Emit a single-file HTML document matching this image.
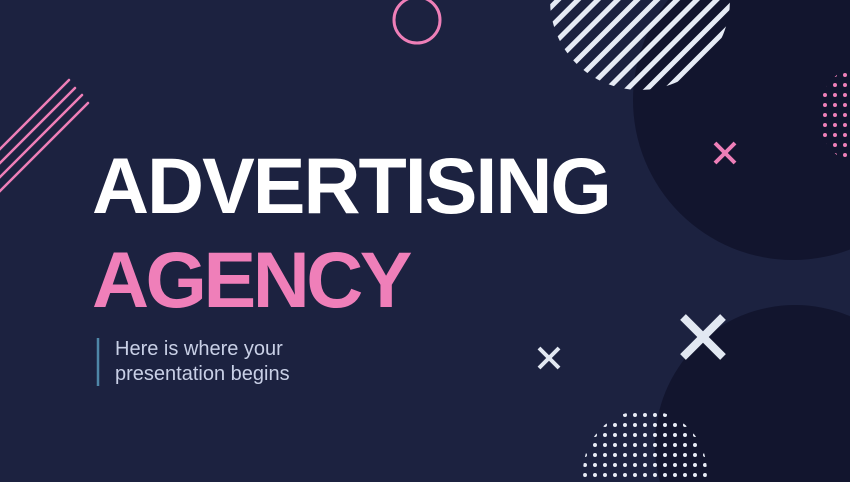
<!DOCTYPE html>
<html><head><meta charset="utf-8"><style>
html,body{margin:0;padding:0;background:#1c2240;width:850px;height:482px;overflow:hidden;}
#s{position:relative;width:850px;height:482px;overflow:hidden;background:#1c2240;font-family:"Liberation Sans",sans-serif;}
svg{position:absolute;left:0;top:0;}
.t{position:absolute;left:92px;font-weight:bold;font-size:79px;line-height:1;white-space:nowrap;}
</style></head><body><div id="s">
<svg width="850" height="482">
<defs>
<pattern id="pd" x="0" y="0" width="10" height="10" patternUnits="userSpaceOnUse"><circle cx="5" cy="5" r="2" fill="#ee7fb8"/></pattern>
<pattern id="wd" x="0" y="0" width="10" height="10" patternUnits="userSpaceOnUse"><circle cx="5" cy="5" r="2" fill="#e8ecf6"/></pattern>
<pattern id="st" x="0" y="0" width="14" height="14" patternUnits="userSpaceOnUse" patternTransform="rotate(45)"><rect x="0" y="0" width="5" height="14" fill="#e6ebf5"/></pattern>
<clipPath id="c1"><circle cx="640" cy="0" r="90"/></clipPath>
</defs>
<circle cx="793" cy="100" r="160" fill="#12152e"/>
<circle cx="795" cy="445" r="140" fill="#12152e"/>
<rect x="540" y="0" width="200" height="95" fill="url(#st)" clip-path="url(#c1)"/>
<circle cx="870" cy="115" r="52" fill="url(#pd)"/>
<circle cx="645" cy="472" r="62" fill="url(#wd)"/>
<circle cx="417" cy="20" r="23" fill="none" stroke="#ee7fb8" stroke-width="3"/>
<g stroke="#ee7fb8" stroke-width="2.5" stroke-linecap="round">
<line x1="69" y1="80" x2="-5" y2="154"/>
<line x1="75" y1="88" x2="-5" y2="168"/>
<line x1="82" y1="95" x2="-5" y2="182"/>
<line x1="88" y1="103" x2="-5" y2="196"/>
</g>
<g stroke="#ee7fb8" stroke-width="4"><line x1="715" y1="143" x2="735" y2="163"/><line x1="735" y1="143" x2="715" y2="163"/></g>
<g stroke="#e2e8f2" stroke-width="8"><line x1="683" y1="317" x2="723" y2="357"/><line x1="723" y1="317" x2="683" y2="357"/></g>
<g stroke="#e2e8f2" stroke-width="4"><line x1="539" y1="348" x2="559" y2="368"/><line x1="559" y1="348" x2="539" y2="368"/></g>
<line x1="98" y1="338" x2="98" y2="386" stroke="#4f87a8" stroke-width="2.5"/>
</svg>
<div class="t" style="top:146px;color:#fff;letter-spacing:-2px;">ADVERTISING</div>
<div class="t" style="top:240px;color:#ef7fb9;letter-spacing:-3.5px;">AGENCY</div>
<div style="position:absolute;left:115px;top:337px;color:#c9d0e6;font-size:20px;line-height:25px;">Here is where your<br>presentation begins</div>
</div></body></html>
